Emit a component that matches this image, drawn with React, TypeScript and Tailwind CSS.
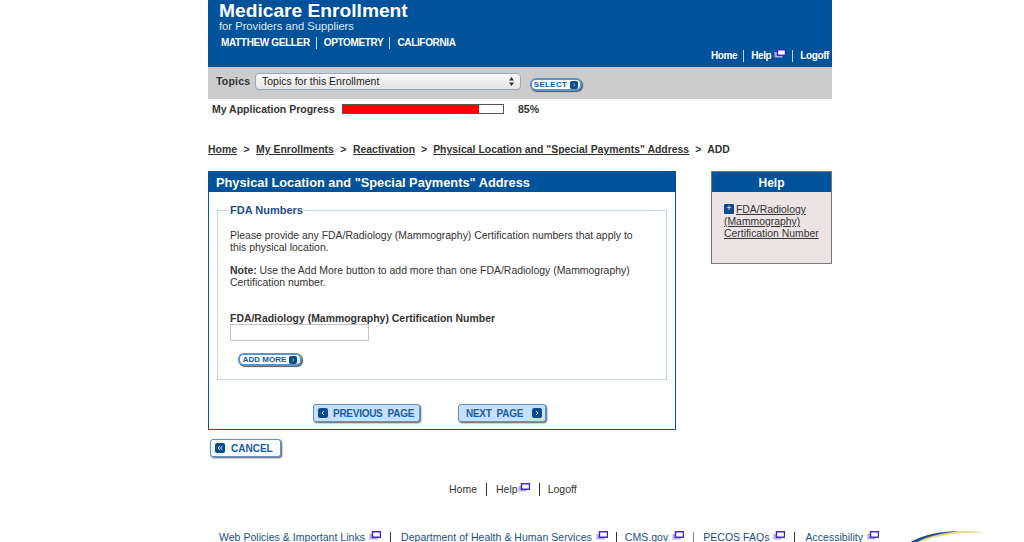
import React from "react";

const Ext = ({ className = "" }: { className?: string }) => (
  <svg width="12" height="10" viewBox="0 0 12 10" className={"inline-block " + className}>
    <rect x="0.5" y="3" width="8" height="5.5" fill="#b7a6ec" />
    <rect x="3.5" y="0.75" width="8" height="5.5" fill="#fff" stroke="#3b22c8" strokeWidth="1.4" />
  </svg>
);

const Chev = ({ dir = "r", double = false, size = 10 }: { dir?: "r" | "l"; double?: boolean; size?: number }) => (
  <span className="inline-flex items-center justify-center bg-[#0b4a8e] rounded-[2px] shrink-0" style={{ width: size, height: size }}>
    <svg width={size - 2} height={size - 2} viewBox="0 0 8 8">
      {dir === "r" ? (
        <path d="M3 2l2 2-2 2" fill="none" stroke="#cfe3f7" strokeWidth="1" />
      ) : double ? (
        <path d="M4 2L2 4l2 2M6.500 2l-2 2 2 2" fill="none" stroke="#cfe3f7" strokeWidth="1" />
      ) : (
        <path d="M5 2L3 4l2 2" fill="none" stroke="#cfe3f7" strokeWidth="1" />
      )}
    </svg>
  </span>
);

const Sep = ({ c = "bg-[#333]", h = "h-[13px]" }: { c?: string; h?: string }) => <span className={"inline-block w-px " + h + " " + c} />;

export default function App() {
  return (
    <div className="h-[542px] overflow-hidden bg-white font-['Liberation_Sans',Arial,sans-serif] text-[#333]">
      <div className="w-[624px] ml-[208px]">
        {/* Header */}
        <header className="relative h-[67px] bg-[#00529b] text-white">
          <div className="pl-[11px] pt-0">
            <div className="text-[19.200px] leading-[21px] font-bold">Medicare Enrollment</div>
            <div className="text-[11.200px] leading-[11px] text-[#dfe9f4]">for Providers and Suppliers</div>
            <div className="flex items-center pl-[2px] mt-[4px] text-[10px] leading-[13px] font-bold tracking-[-0.35px]">
              <span>MATTHEW GELLER</span>
              <Sep c="bg-[#c5d6e8]" h="h-[12px] ml-[6px] mr-[7px]" />
              <span>OPTOMETRY</span>
              <Sep c="bg-[#c5d6e8]" h="h-[12px] ml-[6px] mr-[7px]" />
              <span>CALIFORNIA</span>
            </div>
          </div>
          <div className="absolute right-[3px] top-[49px] flex items-center text-[10px] leading-[13px] font-bold tracking-[-0.4px]">
            <span>Home</span>
            <Sep c="bg-[#c5d6e8]" h="h-[12px] ml-[6px] mr-[7px]" />
            <span>Help</span>
            <Ext className="ml-[3px] mb-[3px]" />
            <Sep c="bg-[#c5d6e8]" h="h-[12px] ml-[6px] mr-[7px]" />
            <span>Logoff</span>
          </div>
        </header>

        {/* Topics */}
        <div className="h-[32px] bg-[#cccccc] flex items-start pl-[8px] pt-[6px]">
          <span className="text-[10.500px] leading-[16px] font-bold tracking-[0.2px] text-[#333] w-[39px]">Topics</span>
          <div className="w-[266px] h-[17px] rounded-[4px] border border-[#9aa7bd] bg-gradient-to-b from-[#fafafa] to-[#e4e4e4] flex items-center justify-between text-[10.500px] pl-[6px] pr-[4px] text-[#222]">
            <span>Topics for this Enrollment</span>
            <svg width="7" height="11" viewBox="0 0 7 11" className="mr-[1px]"><path d="M3.500 1l2.500 3.500H1zM3.500 10L1 6.500h5z" fill="#333" /></svg>
          </div>
          <button className="ml-[9px] mt-[5px] w-[52px] h-[13px] rounded-[6px] bg-[#f7fbff] border-2 border-[#5b94cc] flex items-center justify-center gap-[3px] text-[8px] font-bold text-[#1a5ea3] tracking-[0.3px] shadow-[1px_1px_1px_#555]">
            SELECT <Chev size={8} />
          </button>
        </div>

        {/* Progress */}
        <div className="flex items-center h-[20px] pl-[4px] pt-[1px] text-[10.500px] font-bold whitespace-nowrap">
          <span className="w-[130px]">My Application Progress</span>
          <div className="w-[162px] h-[10px] border border-[#555] bg-white mb-[2px]">
            <div className="h-full bg-[#ff0000]" style={{ width: "85%" }} />
          </div>
          <span className="ml-[14px]">85%</span>
        </div>

        {/* Breadcrumb */}
        <nav className="mt-[24px] h-[14px] flex items-center text-[10.450px] font-bold leading-[14px] whitespace-nowrap">
          <a className="underline">Home</a>
          <span className="mx-[6.500px]">&gt;</span>
          <a className="underline">My Enrollments</a>
          <span className="mx-[6.500px]">&gt;</span>
          <a className="underline">Reactivation</a>
          <span className="mx-[6px]">&gt;</span>
          <a className="underline">Physical Location and "Special Payments" Address</a>
          <span className="mx-[6px]">&gt;</span>
          <span>ADD</span>
        </nav>

        <div className="mt-[14px] flex items-start">
          {/* Main column */}
          <div className="w-[468px]">
            <section className="h-[259px] border border-[#00529b]">
              <h1 className="h-[20px] bg-[#00529b] text-white text-[12.800px] leading-[21px] font-bold pl-[7px]">
                Physical Location and "Special Payments" Address
              </h1>
              <fieldset className="mx-[8px] mt-[11px] h-[177px] border border-[#bcd6ea] pl-[12px] pr-[16px] relative">
                <legend className="text-[11px] font-bold text-[#1c4f85] leading-[14px] px-[1px] -ml-[1px]">FDA Numbers</legend>
                <p className="text-[10.450px] leading-[12px] mt-[13px]">
                  Please provide any FDA/Radiology (Mammography) Certification numbers that apply to this physical location.
                </p>
                <p className="text-[10.450px] leading-[12px] mt-[11px]">
                  <b>Note:</b> Use the Add More button to add more than one FDA/Radiology (Mammography) Certification number.
                </p>
                <label className="block text-[10.450px] font-bold leading-[11px] mt-[24px]">
                  FDA/Radiology (Mammography) Certification Number
                </label>
                <div className="w-[139px] h-[17px] border border-[#c4c4c4] bg-white" />
                <button className="mt-[12px] ml-[8px] w-[64px] h-[13px] rounded-[6px] bg-[#f7fbff] border-2 border-[#5b94cc] flex items-center justify-center gap-[3px] text-[8px] font-bold text-[#1a5ea3] shadow-[1px_1px_1px_#555] whitespace-nowrap">
                  ADD MORE <Chev size={8} />
                </button>
              </fieldset>
              <div className="flex mt-[24px] pl-[104px] gap-[38px]">
                <button className="w-[107px] h-[18px] rounded-[3px] bg-[#c8e1f8] border border-[#5b94cc] flex items-center pl-[4px] gap-[5px] text-[10px] font-bold text-[#1a5ea3] tracking-[-0.27px] shadow-[1px_1px_2px_#555] whitespace-nowrap">
                  <Chev dir="l" /> PREVIOUS&nbsp; PAGE
                </button>
                <button className="w-[88px] h-[18px] rounded-[3px] bg-[#c8e1f8] border border-[#5b94cc] flex items-center justify-between pl-[7px] pr-[3px] text-[10px] font-bold text-[#1a5ea3] tracking-[-0.27px] shadow-[1px_1px_2px_#555] whitespace-nowrap">
                  NEXT&nbsp; PAGE <Chev />
                </button>
              </div>
            </section>
            <button className="mt-[9px] ml-[2px] w-[71px] h-[18px] rounded-[3px] bg-[#f7fbff] border border-[#5b94cc] flex items-center pl-[4px] gap-[6px] text-[10px] font-bold text-[#1a5ea3] shadow-[1px_1px_2px_#555]">
              <Chev dir="l" double /> CANCEL
            </button>
          </div>

          {/* Help */}
          <aside className="ml-[35px] w-[121px] h-[93px] border border-[#777] bg-[#ece4e4]">
            <div className="h-[20px] bg-[#00529b] text-white text-[12px] leading-[22px] font-bold text-center">Help</div>
            <div className="pl-[12px] pt-[12px] text-[10.400px] leading-[12px]">
              <span className="inline-block w-[10px] h-[10px] bg-[#0b4a8e] rounded-[1px] text-[#fff] text-[9px] leading-[9px] text-center align-[2px] mr-[2px]">+</span>
              <a className="underline">FDA/Radiology (Mammography) Certification Number</a>
            </div>
          </aside>
        </div>
      </div>

      {/* Footer */}
      <footer className="text-[10.500px] leading-[13px]">
        <div className="mt-[26px] ml-[449px] flex items-center text-[#333]">
          <span>Home</span>
          <Sep h="h-[13px] mx-[9px]" />
          <span>Help</span>
          <Ext className="mb-[3px]" />
          <Sep h="h-[13px] ml-[9px] mr-[8px]" />
          <span>Logoff</span>
        </div>
        <div className="relative mt-[35px] ml-[219px] flex items-center text-[#1c4f85] whitespace-nowrap tracking-[0.03px]">
          <span>Web Policies &amp; Important Links</span>
          <Ext className="ml-[4px] mb-[3px]" />
          <Sep h="h-[12px] ml-[9px] mr-[10px]" />
          <span>Department of Health &amp; Human Services</span>
          <Ext className="ml-[4px] mb-[3px]" />
          <Sep h="h-[12px] ml-[8px] mr-[8px]" />
          <span>CMS.gov</span>
          <Ext className="ml-[4px] mb-[3px]" />
          <Sep c="bg-[#888]" h="h-[12px] ml-[9px] mr-[9px]" />
          <span>PECOS FAQs</span>
          <Ext className="ml-[4px] mb-[3px]" />
          <Sep h="h-[12px] ml-[9px] mr-[10px]" />
          <span>Accessibility</span>
          <Ext className="ml-[4px] mb-[3px]" />
          <svg width="78" height="14" viewBox="0 0 78 14" className="absolute left-[689px] top-[-1px]">
            <path d="M1 13C14 5 36 1 60 1c6 0 12 .5 16 2C58 2 30 4 8 14z" fill="#efd987" />
            <path d="M1 13C14 5 30 1.500 52 1 34 3 16 7 6 14z" fill="#1d4f91" />
          </svg>
        </div>
      </footer>
    </div>
  );
}
